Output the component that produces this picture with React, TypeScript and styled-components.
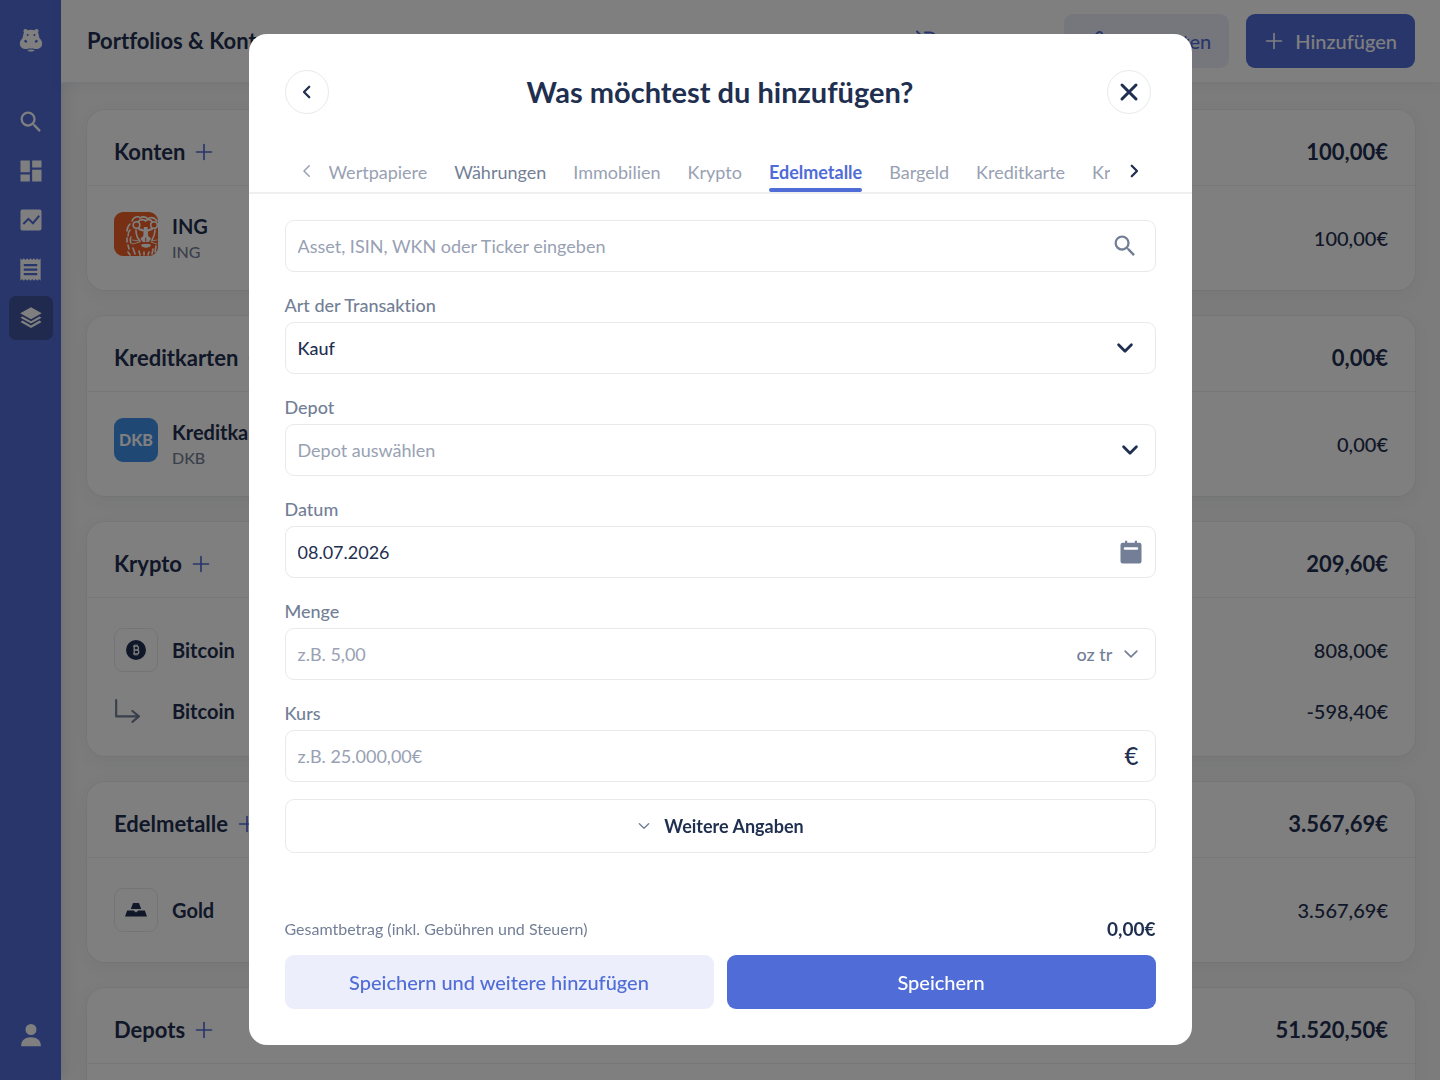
import React, { useState } from "react";
import styled, { createGlobalStyle } from "styled-components";

const color = {
  ink: "#1f2f50",
  slate: "#737f96",
  muted: "#98a1b3",
  brand: "#506cd6",
  brandDark: "#40549f",
  brandSoft: "#eceefb",
  line: "#eeeff1",
  boxLine: "#e8e9ec",
};

const GlobalStyle = createGlobalStyle`
  *, *::before, *::after { box-sizing: border-box; }
  body {
    margin: 0;
    background: #f8f8f9;
    color: ${color.ink};
    font-family: Lato, "Liberation Sans", sans-serif;
    font-size: 18px;
    line-height: 24px;
    font-variant-ligatures: none;
  }
  button, input, select { font: inherit; color: inherit; margin: 0; }
  button { cursor: pointer; }
  svg { display: block; flex: none; }
`;

/* ---------- icons ---------- */

type IconProps = { size?: number; d: string; fill?: string };

const Glyph = ({ size = 24, d, fill = "currentColor" }: IconProps) => (
  <svg width={size} height={size} viewBox="0 0 24 24" fill={fill} aria-hidden="true">
    <path fillRule="evenodd" d={d} />
  </svg>
);

type StrokeProps = { size?: number; d: string; weight?: number };

const Stroke = ({ size = 24, d, weight = 2 }: StrokeProps) => (
  <svg
    width={size}
    height={size}
    viewBox="0 0 24 24"
    fill="none"
    stroke="currentColor"
    strokeWidth={weight}
    strokeLinecap="round"
    strokeLinejoin="round"
    aria-hidden="true"
  >
    <path d={d} />
  </svg>
);

const paths = {
  search:
    "M15.5 14h-.79l-.28-.27A6.47 6.47 0 0 0 16 9.5 6.5 6.5 0 1 0 9.5 16c1.61 0 3.09-.59 4.23-1.57l.27.28v.79l5 4.99L20.49 19l-4.99-5zm-6 0C7.01 14 5 11.99 5 9.5S7.01 5 9.5 5 14 7.01 14 9.5 11.99 14 9.5 14z",
  dashboard: "M3 13h8V3H3v10zm0 8h8v-6H3v6zm10 0h8V11h-8v10zm0-18v6h8V3h-8z",
  chart:
    "M4.5 3h15A1.5 1.5 0 0 1 21 4.500v15a1.500 1.500 0 0 1-1.500 1.500h-15A1.500 1.500 0 0 1 3 19.500v-15A1.500 1.500 0 0 1 4.500 3zM4.800 14.800l1.300 1.300 3.700-3.800 3.900 3.800 6-7.100-1.300-1.200-4.800 5.700-3.800-3.700z",
  receipt:
    "M18 17H6v-2h12v2zm0-4H6v-2h12v2zm0-4H6V7h12v2zM3 22l1.500-1.500L6 22l1.500-1.500L9 22l1.500-1.500L12 22l1.500-1.500L15 22l1.500-1.500L18 22l1.500-1.500L21 22V2l-1.500 1.500L18 2l-1.500 1.500L15 2l-1.500 1.500L12 2l-1.500 1.500L9 2 7.500 3.500 6 2 4.500 3.500 3 2v20z",
  layers:
    "M12 1.300 1.200 7.200 12 13.300l10.800-6.100zM3.600 10.500l-2.200 1.300L12 17.600l10.600-5.800-2.200-1.300L12 15.200zM3.600 14.600l-2.200 1.300L12 21.900l10.600-6-2.200-1.300L12 19.400z",
  user:
    "M12 1a5.500 5.500 0 1 1 0 11 5.500 5.500 0 0 1 0-11zM2.200 23.200v-1.200c0-4.500 4-7.800 9.800-7.800s9.800 3.300 9.800 7.800v1.200z",
  calendar:
    "M6.500 1.500h2v2h7v-2h2v2h2.200A2 2 0 0 1 21.700 5.500v15a2 2 0 0 1-2 2H4.300a2 2 0 0 1-2-2v-15a2 2 0 0 1 2-2h2.200zM6.500 7.500a.8.8 0 0 0 0 2.400h11a.8.8 0 0 0 0-2.400z",
  left: "M15 5l-7 7 7 7",
  right: "M9 5l7 7-7 7",
  down: "M5 8.500l7 7 7-7",
  close: "M5 5l14 14M19 5 5 19",
  plus: "M12 3v18M3 12h18",
  branch: "M2 2v15h21M17 12l6 5-6 5",
  pencil: "M21.174 6.812a1 1 0 0 0-3.986-3.987L3.842 16.174a2 2 0 0 0-.5.83l-1.321 4.352a.5.5 0 0 0 .623.622l4.353-1.320a2 2 0 0 0 .830-.497z",
  syncOff: "M2 2.500l19 19M10 3.500h5a6 6 0 0 1 6 6v4M5 9v6a5 5 0 0 0 5 5h4",
};

const Hippo = () => (
  <svg width="24" height="24" viewBox="0 0 24 24" aria-hidden="true">
    <path
      fill="currentColor"
      d="M5.600 1.200c1.100-.4 2.200.1 2.700 1.100 2.300-.8 5.100-.8 7.400 0 .5-1 1.600-1.500 2.700-1.100 1.300.5 1.500 2 .6 3.100 1 2.300.8 4.400 1.700 6.200 1.800 1.700 2.800 3.700 2.400 6.100-.5 3.300-3.500 5-7.100 4.300-2.500-.6-5.500-.6-8 0-3.600.7-6.600-1-7.100-4.300-.4-2.400.6-4.400 2.400-6.100.9-1.800.7-3.900 1.700-6.200-.9-1.100-.7-2.600.6-3.100zM8.300 22c2.300-.7 5.100-.7 7.400 0-1.600 2-5.800 2-7.400 0z"
    />
    <g fill={color.brand}>
      <circle cx="8.600" cy="7" r="1" />
      <circle cx="15.400" cy="7" r="1" />
      <ellipse cx="6.700" cy="13.300" rx="1.600" ry="1.200" transform="rotate(35 6.700 13.300)" />
      <ellipse cx="17.300" cy="13.300" rx="1.600" ry="1.200" transform="rotate(-35 17.300 13.300)" />
    </g>
  </svg>
);

const Lion = () => (
  <svg width="44" height="44" viewBox="0 0 44 44" fill="none" stroke="#fff" strokeLinecap="round" aria-hidden="true">
    <g strokeWidth="1.600">
      <path d="M18 9c1-3 4-5 7-4M26 6c3-2 6-1 8 1M35 6c3-1 6 0 8 3M16 12c-2 2-3 4-3 7M16 18c-2 2-2 4-2 6M13 26v4M17 25c-1 2-1 4 0 6M14 33l1 4M14 40l2 3M19 36l2 6M25 39l1 4M30 40v3M35 40l-1 3M39 37l-1 5M42 34l-1 6" />
      <circle cx="22.500" cy="13" r="3.300" />
      <circle cx="40" cy="13" r="3.300" />
      <path d="M24 10c2-3 6-3 7.500-1 1.500-2 5-2 7 1M22 18c0 4 1 8 4 11M41 18c0 4-1 7-3 10" />
      <path d="M25 17l4 1.500M38 17l-4 1.500" strokeWidth="2" />
    </g>
    <path fill="#fff" stroke="none" d="M29.800 15h3.800l.5 9 3 2.500-2.500 3.500h-5.800l-2.500-3.500 3-2.500zM27 33c3-2 7-2 10 0-1 3.500-9 3.500-10 0z" />
    <path strokeWidth="0.900" d="M18 28l8 1M18 32l8-2M37 29l6-1M37 30l6 2" />
    <path stroke="#f0602a" strokeWidth="1.200" d="M31.700 26v3M28.500 30.500c2 1 4.500 1 6.500 0" />
  </svg>
);

const BitcoinIcon = () => (
  <svg width="20" height="20" viewBox="0 0 20 20" fill="none" aria-hidden="true">
    <circle cx="10" cy="10" r="10" fill="currentColor" />
    <path
      stroke="#fff"
      strokeWidth="1.300"
      d="M7 6.200h3.600a1.900 1.900 0 0 1 0 3.800H8.200h2.700a1.900 1.900 0 0 1 0 3.800H7M8.200 6v8M9 4.500v1.700M11 4.500v1.700M9 13.800v1.700M11 13.800v1.700"
    />
  </svg>
);

const GoldIcon = () => (
  <svg width="22" height="14" viewBox="0 0 22 14" fill="currentColor" aria-hidden="true">
    <path d="M8 0h6l2.200 6H5.800zM2.200 7.500h6.300L11 9.500l2.500-2h6.300L22 13.500H0z" />
  </svg>
);

/* ---------- page ---------- */

const Page = styled.div`
  display: flex;
  height: 100vh;
  overflow: hidden;
`;

const Sidebar = styled.nav`
  display: flex;
  flex-direction: column;
  align-items: center;
  gap: 5px;
  width: 61px;
  flex: none;
  padding: 18px 0 23px;
  background: ${color.brand};
  box-shadow: 2px 0 16px rgba(31, 47, 80, 0.14);
`;

const NavLink = styled.a<{ $active?: boolean; $place?: "first" | "last" }>`
  display: flex;
  align-items: center;
  justify-content: center;
  width: 44px;
  height: 44px;
  border-radius: 7px;
  color: #fff;
  background: ${(p) => (p.$active ? color.brandDark : "transparent")};
  margin-bottom: ${(p) => (p.$place === "first" ? "33px" : "0")};
  margin-top: ${(p) => (p.$place === "last" ? "auto" : "0")};
`;

const Main = styled.div`
  flex: 1;
  min-width: 0;
`;

const TopBar = styled.header`
  display: flex;
  align-items: center;
  gap: 17px;
  height: 83px;
  padding: 0 25px 0 26px;
  background: #fff;
  border-bottom: 1px solid ${color.line};
  box-shadow: 0 2px 12px rgba(31, 47, 80, 0.06);
`;

const PageTitle = styled.h1`
  flex: 1;
  margin: 0;
  font-size: 22px;
  line-height: 28px;
  font-weight: 700;
`;

const PlainButton = styled.button`
  display: flex;
  padding: 0 108px 0 0;
  border: 0;
  background: none;
  color: ${color.brand};
`;

const Button = styled.button<{ $soft?: boolean }>`
  display: flex;
  align-items: center;
  justify-content: center;
  gap: 11px;
  height: 54px;
  padding: 0 18px;
  border: 0;
  border-radius: 9px;
  font-size: 20px;
  font-weight: 500;
  white-space: nowrap;
  color: ${(p) => (p.$soft ? color.brand : "#fff")};
  background: ${(p) => (p.$soft ? color.brandSoft : color.brand)};
`;

const CardList = styled.main`
  display: flex;
  flex-direction: column;
  gap: 26px;
  padding: 27px 25px 26px 26px;
`;

const Card = styled.section`
  background: #fff;
  border-radius: 18px;
  box-shadow: 0 0 0 1px rgba(31, 47, 80, 0.03), 0 4px 18px rgba(31, 47, 80, 0.06);
`;

const CardHead = styled.div`
  display: flex;
  align-items: center;
  gap: 9px;
  padding: 28px 27px 19px;
  border-bottom: 1px solid ${color.line};
  font-size: 22px;
  line-height: 28px;
  font-weight: 700;
`;

const CardTitle = styled.h2`
  margin: 0;
  font: inherit;
`;

const AddButton = styled.button`
  display: flex;
  padding: 0;
  border: 0;
  background: none;
  color: ${color.brand};
`;

const Amount = styled.span`
  margin-left: auto;
`;

const CardBody = styled.div`
  padding: 22px 27px;
`;

const Row = styled.div<{ $sub?: boolean }>`
  display: flex;
  align-items: center;
  height: ${(p) => (p.$sub ? "46px" : "60px")};
  margin-top: ${(p) => (p.$sub ? "8px" : "0")};
  font-size: 20px;
  font-weight: 500;
`;

const Info = styled.div<{ $top: boolean }>`
  display: flex;
  align-items: ${(p) => (p.$top ? "flex-start" : "center")};
  gap: 14px;
`;

const Tile = styled.span<{ $bg?: string; $bare?: boolean }>`
  display: flex;
  align-items: center;
  justify-content: ${(p) => (p.$bare ? "flex-start" : "center")};
  width: 44px;
  height: 44px;
  overflow: hidden;
  border-radius: 9px;
  border: ${(p) => (p.$bg || p.$bare ? "0" : `1px solid ${color.boxLine}`)};
  background: ${(p) => p.$bg ?? "transparent"};
  color: ${(p) => (p.$bg ? "#fff" : p.$bare ? color.slate : color.ink)};
  font-size: 16px;
  font-weight: 900;
`;

const Name = styled.div`
  font-size: 20px;
  line-height: 28px;
  font-weight: 700;
`;

const Sub = styled.div`
  font-size: 16px;
  line-height: 24px;
  color: ${color.slate};
`;

type Entry = { name: string; sub?: string; tile: React.ReactNode; bg?: string; child?: boolean; value: string };
type Group = { title: string; total: string; entries: Entry[] };

const groups: Group[] = [
  { title: "Konten", total: "100,00€", entries: [{ name: "ING", sub: "ING", tile: <Lion />, bg: "#f0602a", value: "100,00€" }] },
  { title: "Kreditkarten", total: "0,00€", entries: [{ name: "Kreditkarte", sub: "DKB", tile: "DKB", bg: "#4090e8", value: "0,00€" }] },
  {
    title: "Krypto",
    total: "209,60€",
    entries: [
      { name: "Bitcoin", tile: <BitcoinIcon />, value: "808,00€" },
      { name: "Bitcoin", tile: <Stroke size={26} d={paths.branch} />, child: true, value: "-598,40€" },
    ],
  },
  { title: "Edelmetalle", total: "3.567,69€", entries: [{ name: "Gold", tile: <GoldIcon />, value: "3.567,69€" }] },
  { title: "Depots", total: "51.520,50€", entries: [] },
];

/* ---------- dialog ---------- */

const Overlay = styled.div`
  position: fixed;
  inset: 0;
  display: flex;
  justify-content: center;
  padding: 34px 24px 35px;
  background: rgba(0, 0, 0, 0.5);
`;

const Dialog = styled.form`
  display: flex;
  flex-direction: column;
  width: 100%;
  max-width: 943px;
  overflow: hidden;
  border-radius: 18px;
  background: #fff;
`;

const DialogHead = styled.div`
  display: grid;
  grid-template-columns: 49px 1fr 49px;
  align-items: center;
  padding: 36px;
`;

const DialogTitle = styled.h2`
  margin: 0;
  font-size: 29px;
  line-height: 36px;
  font-weight: 700;
  text-align: center;
`;

const RoundButton = styled.button`
  display: flex;
  align-items: center;
  justify-content: center;
  width: 44px;
  height: 44px;
  padding: 0;
  border: 1px solid ${color.boxLine};
  border-radius: 50%;
  background: #fff;
`;

const TabBar = styled.div`
  display: flex;
  align-items: flex-start;
  padding: 0 48px;
  height: 44px;
  flex: none;
  border-bottom: 2px solid ${color.line};
`;

const TabArrow = styled.button<{ $off?: boolean }>`
  display: flex;
  align-items: center;
  justify-content: center;
  width: 20px;
  height: 42px;
  padding: 0;
  border: 0;
  background: none;
  color: ${(p) => (p.$off ? color.muted : color.ink)};
`;

const Tabs = styled.div`
  display: flex;
  flex: 1;
  gap: 27px;
  min-width: 0;
  margin: 0 14px 0 12px;
  overflow: hidden;
`;

const Tab = styled.button<{ $active: boolean; $strong?: boolean }>`
  position: relative;
  flex: none;
  height: 42px;
  padding: 2px 0 0;
  border: 0;
  background: none;
  font-weight: ${(p) => (p.$active ? 700 : 400)};
  color: ${(p) => (p.$active ? color.brand : p.$strong ? color.slate : color.muted)};

  &::after {
    content: "";
    position: absolute;
    inset: auto 0 0;
    height: 4px;
    border-radius: 2px;
    background: ${(p) => (p.$active ? color.brand : "transparent")};
  }
`;

const Fields = styled.div`
  display: flex;
  flex-direction: column;
  padding: 26px 36px 0;
`;

const Label = styled.label`
  margin: 21px 0 5px;
  font-weight: 500;
  color: ${color.slate};
`;

const Box = styled.div<{ $inset?: number }>`
  display: flex;
  align-items: center;
  height: 52px;
  padding-right: ${(p) => p.$inset ?? 14}px;
  border: 1px solid ${color.boxLine};
  border-radius: 9px;
  color: ${color.slate};
`;

const Input = styled.input`
  flex: 1;
  min-width: 0;
  height: 50px;
  padding: 0 12px;
  border: 0;
  outline: 0;
  background: none;
  color: ${color.ink};
  &::placeholder { color: ${color.muted}; opacity: 1; }
`;

const Select = styled.select<{ $empty?: boolean }>`
  flex: 1;
  height: 50px;
  padding: 0 12px;
  border: 0;
  outline: 0;
  appearance: none;
  background: none;
  font-weight: ${(p) => (p.$empty ? 400 : 500)};
  color: ${(p) => (p.$empty ? color.muted : color.ink)};
`;

const UnitSelect = styled.select`
  padding: 0 8px 0 0;
  border: 0;
  outline: 0;
  appearance: none;
  background: none;
  font-weight: 500;
  color: ${color.slate};
`;

const Ink = styled.span`
  color: ${color.ink};
  font-size: 24px;
  font-weight: 500;
`;

const MoreButton = styled.button`
  display: flex;
  align-items: center;
  justify-content: center;
  gap: 12px;
  height: 54px;
  margin-top: 17px;
  border: 1px solid ${color.boxLine};
  border-radius: 9px;
  background: #fff;
  font-weight: 700;
  color: ${color.ink};
`;

const Footer = styled.div`
  margin-top: auto;
  padding: 0 36px 36px;
`;

const TotalLine = styled.div`
  display: flex;
  align-items: center;
  justify-content: space-between;
  margin-bottom: 14px;
  font-size: 16px;
  color: ${color.slate};
`;

const Total = styled.output`
  font-size: 19px;
  font-weight: 700;
  color: ${color.ink};
`;

const Actions = styled.div`
  display: grid;
  grid-template-columns: 1fr 1fr;
  gap: 13px;
`;

const Soft = styled.span`
  color: ${color.slate};
`;

const tabNames = ["Wertpapiere", "Währungen", "Immobilien", "Krypto", "Edelmetalle", "Bargeld", "Kreditkarte", "Kredite"];

export default function App() {
  const [tab, setTab] = useState("Edelmetalle");
  const [date, setDate] = useState("08.07.2026");

  return (
    <>
      <GlobalStyle />
      <Page>
        <Sidebar aria-label="Hauptnavigation">
          <NavLink href="#start" aria-label="Start" $place="first"><Hippo /></NavLink>
          <NavLink href="#suche" aria-label="Suche"><Glyph size={28} d={paths.search} /></NavLink>
          <NavLink href="#dashboard" aria-label="Dashboard"><Glyph size={28} d={paths.dashboard} /></NavLink>
          <NavLink href="#analyse" aria-label="Analyse"><Glyph size={28} d={paths.chart} /></NavLink>
          <NavLink href="#buchungen" aria-label="Buchungen"><Glyph size={27} d={paths.receipt} /></NavLink>
          <NavLink href="#portfolios" aria-label="Portfolios" $active><Glyph d={paths.layers} /></NavLink>
          <NavLink href="#profil" aria-label="Profil" $place="last"><Glyph d={paths.user} /></NavLink>
        </Sidebar>
        <Main>
          <TopBar>
            <PageTitle>Portfolios &amp; Konten</PageTitle>
            <PlainButton type="button" aria-label="Synchronisierung"><Stroke d={paths.syncOff} /></PlainButton>
            <Button type="button" $soft><Stroke size={22} d={paths.pencil} />Bearbeiten</Button>
            <Button type="button"><Stroke size={20} d={paths.plus} />Hinzufügen</Button>
          </TopBar>
          <CardList>
            {groups.map((g) => (
              <Card key={g.title}>
                <CardHead>
                  <CardTitle>{g.title}</CardTitle>
                  <AddButton type="button" aria-label={`${g.title} hinzufügen`}><Stroke size={20} d={paths.plus} weight={2} /></AddButton>
                  <Amount>{g.total}</Amount>
                </CardHead>
                <CardBody>
                  {g.entries.map((e, i) => (
                    <Row key={i} $sub={e.child}>
                      <Info $top={!!e.sub}>
                        <Tile $bg={e.bg} $bare={e.child}>{e.tile}</Tile>
                        <div>
                          <Name>{e.name}</Name>
                          {e.sub && <Sub>{e.sub}</Sub>}
                        </div>
                      </Info>
                      <Amount>{e.value}</Amount>
                    </Row>
                  ))}
                </CardBody>
              </Card>
            ))}
          </CardList>
        </Main>
      </Page>

      <Overlay>
        <Dialog role="dialog" aria-modal="true" aria-labelledby="dialog-title" onSubmit={(e) => e.preventDefault()}>
          <DialogHead>
            <RoundButton type="button" aria-label="Zurück"><Stroke size={18} d={paths.left} weight={3} /></RoundButton>
            <DialogTitle id="dialog-title">Was möchtest du hinzufügen?</DialogTitle>
            <RoundButton type="button" aria-label="Schließen"><Stroke size={24} d={paths.close} weight={3} /></RoundButton>
          </DialogHead>
          <TabBar>
            <TabArrow type="button" aria-label="Zurückblättern" $off><Stroke size={18} d={paths.left} weight={2} /></TabArrow>
            <Tabs role="tablist">
              {tabNames.map((t) => (
                <Tab key={t} type="button" role="tab" aria-selected={t === tab} $active={t === tab} $strong={t === "Währungen"} onClick={() => setTab(t)}>
                  {t}
                </Tab>
              ))}
            </Tabs>
            <TabArrow type="button" aria-label="Weiterblättern"><Stroke size={18} d={paths.right} weight={3} /></TabArrow>
          </TabBar>
          <Fields>
            <Box $inset={16}>
              <Input aria-label="Asset suchen" placeholder="Asset, ISIN, WKN oder Ticker eingeben" />
              <Glyph size={28} d={paths.search} />
            </Box>
            <Label htmlFor="kind">Art der Transaktion</Label>
            <Box $inset={19}>
              <Select id="kind"><option>Kauf</option><option>Verkauf</option></Select>
              <Ink><Stroke size={22} d={paths.down} weight={3} /></Ink>
            </Box>
            <Label htmlFor="depot">Depot</Label>
            <Box>
              <Select id="depot" $empty><option>Depot auswählen</option></Select>
              <Ink><Stroke size={22} d={paths.down} weight={3} /></Ink>
            </Box>
            <Label htmlFor="date">Datum</Label>
            <Box $inset={11}>
              <Input id="date" value={date} onChange={(e) => setDate(e.target.value)} />
              <Glyph size={26} d={paths.calendar} />
            </Box>
            <Label htmlFor="quantity">Menge</Label>
            <Box $inset={14}>
              <Input id="quantity" placeholder="z.B. 5,00" />
              <UnitSelect aria-label="Einheit"><option>oz tr</option></UnitSelect>
              <Stroke size={20} d={paths.down} weight={2} />
            </Box>
            <Label htmlFor="price">Kurs</Label>
            <Box $inset={16}>
              <Input id="price" placeholder="z.B. 25.000,00€" />
              <Ink>€</Ink>
            </Box>
            <MoreButton type="button" aria-expanded="false">
              <Soft><Stroke size={16} d={paths.down} weight={2} /></Soft>
              Weitere Angaben
            </MoreButton>
          </Fields>
          <Footer>
            <TotalLine>
              <span>Gesamtbetrag (inkl. Gebühren und Steuern)</span>
              <Total>0,00€</Total>
            </TotalLine>
            <Actions>
              <Button type="button" $soft>Speichern und weitere hinzufügen</Button>
              <Button type="submit">Speichern</Button>
            </Actions>
          </Footer>
        </Dialog>
      </Overlay>
    </>
  );
}
